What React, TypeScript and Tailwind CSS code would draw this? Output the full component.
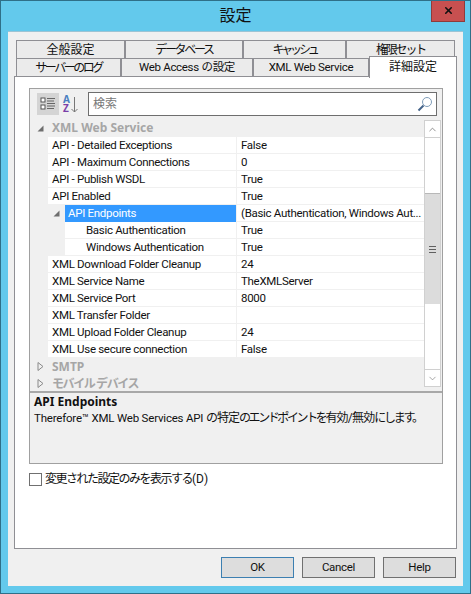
import React from 'react';
import { ChevronUp, ChevronDown, X } from 'lucide-react';

const FONT = "font-['Roboto','Noto_Sans_CJK_JP',sans-serif]";
const BOLD = "font-['Noto_Sans','Noto_Sans_CJK_JP',sans-serif] font-bold";
const LATIN = 'text-[11.5px] tracking-[-0.3px]';

const TOP_TABS = [
  { label: '全般設定', w: 'w-[109px]', track: 'text-[12px]' },
  { label: 'データベース', w: 'w-[118px]', track: 'text-[12px] tracking-[-2.3px]' },
  { label: 'キャッシュ', w: 'w-[103px]', track: 'text-[12px] tracking-[-3.2px]' },
  { label: '権限セット', w: 'w-[109px]', track: 'text-[12px] tracking-[-2.2px]' },
];

const BOTTOM_TABS = [
  { label: 'サーバーのログ', w: 'w-[105px]', track: 'text-[12px] tracking-[-2.5px]' },
  { label: 'Web Access の設定', w: 'w-[132px]', track: LATIN },
  { label: 'XML Web Service', w: 'w-[116px]', track: LATIN },
];

const ROWS = [
  { name: 'API - Detailed Exceptions', value: 'False' },
  { name: 'API - Maximum Connections', value: '0' },
  { name: 'API - Publish WSDL', value: 'True' },
  { name: 'API Enabled', value: 'True' },
  { name: 'API Endpoints', value: '(Basic Authentication, Windows Aut...', kind: 'selected' },
  { name: 'Basic Authentication', value: 'True', kind: 'child' },
  { name: 'Windows Authentication', value: 'True', kind: 'child' },
  { name: 'XML Download Folder Cleanup', value: '24' },
  { name: 'XML Service Name', value: 'TheXMLServer' },
  { name: 'XML Service Port', value: '8000' },
  { name: 'XML Transfer Folder', value: '' },
  { name: 'XML Upload Folder Cleanup', value: '24' },
  { name: 'XML Use secure connection', value: 'False' },
];

function Tab({ label, w, track }: { label: string; w: string; track: string }) {
  return (
    <div className={`${w} h-[18px] shrink-0 flex items-center justify-center bg-[#ebebeb] border border-b-0 border-[#8f8f94] leading-none text-[#111] whitespace-nowrap ${track}`}>
      {label}
    </div>
  );
}

function Expanded() {
  return (
    <svg width="7" height="7" viewBox="0 0 7 7" className="shrink-0">
      <path d="M6.5 0.5V6.5H0.5Z" fill="#6e6e6e" />
    </svg>
  );
}

function Collapsed() {
  return (
    <svg width="7" height="9" viewBox="0 0 7 9" className="shrink-0">
      <path d="M1 0.5L6 4.5L1 8.5Z" fill="none" stroke="#8a8a8a" />
    </svg>
  );
}

function Row({ name, value, kind }: { name: string; value: string; kind?: string }) {
  const selected = kind === 'selected';
  const child = kind === 'child';
  const nested = selected || child;
  return (
    <div className={`h-[17px] flex leading-[15px] text-[#111] ${LATIN}`}>
      <div className="w-[18px] shrink-0" />
      {nested ? (
        <div className="w-[17px] shrink-0 flex items-center justify-center">{selected && <Expanded />}</div>
      ) : null}
      <div
        className={`${nested ? 'w-[171px]' : 'w-[188px]'} shrink-0 h-[17px] pt-[1px] border-b border-[#f0f0f0] whitespace-nowrap ${
          selected ? 'bg-[#3399ff] text-white pl-[3px] border-b-[#3399ff]' : child ? 'bg-white pl-[21px]' : 'bg-white pl-[4px]'
        }`}
      >
        {name}
      </div>
      <div className="w-px shrink-0 bg-[#f0f0f0]" />
      <div className="w-[187px] shrink-0 h-[17px] pt-[1px] bg-white border-b border-[#f0f0f0] pl-[4px] whitespace-nowrap overflow-hidden">
        {value}
      </div>
    </div>
  );
}

function GroupHeader({ label, open, h, track }: { label: string; open?: boolean; h: string; track?: string }) {
  return (
    <div className={`${h} flex items-center pl-[7px] gap-[8px] text-[12px] text-[#a6a6a6] whitespace-nowrap ${BOLD}`}>
      {open ? <Expanded /> : <Collapsed />}
      <span className={track}>{label}</span>
    </div>
  );
}

function Scrollbar() {
  return (
    <div className="absolute left-[394px] top-[31px] w-[17px] h-[267px] bg-white border border-[#d0d0d0] flex flex-col">
      <div className="h-[17px] flex items-center justify-center border-b border-[#d0d0d0] shrink-0">
        <ChevronUp size={11} strokeWidth={1.5} className="text-[#606060]" />
      </div>
      <div className="h-[55px] shrink-0" />
      <div className="h-[111px] shrink-0 bg-[#dcdcdc] border-t border-[#b8b8b8] flex items-center justify-center">
        <div className="w-[7px] h-[7px] flex flex-col justify-between">
          <div className="h-px bg-[#606060]" />
          <div className="h-px bg-[#606060]" />
          <div className="h-px bg-[#606060]" />
        </div>
      </div>
      <div className="flex-1" />
      <div className="h-[17px] flex items-center justify-center border-t border-[#d0d0d0] shrink-0">
        <ChevronDown size={11} strokeWidth={1.5} className="text-[#808080]" />
      </div>
    </div>
  );
}

function DialogButton({ label, primary }: { label: string; primary?: boolean }) {
  return (
    <button className={`w-[73px] h-[21px] bg-[#dddddd] border leading-none text-[#111] ${LATIN} ${primary ? 'border-[#3c7fb1]' : 'border-[#707070]'}`}>
      {label}
    </button>
  );
}

export default function App() {
  return (
    <div className={`${FONT} w-[471px] h-[594px] bg-[#63c9ec] border border-[#2f6f88] flex flex-col overflow-hidden`}>
      {/* Title bar */}
      <div className="relative h-[30px] shrink-0 flex items-center justify-center text-[16px] text-[#111]">
        設定
        <div className="absolute right-[5px] top-[-1px] w-[34px] h-[22px] bg-[#c75050] border border-[#8f3b3b] border-t-0 flex items-center justify-center">
          <X size={11} strokeWidth={3.5} className="text-[#111]" />
        </div>
      </div>

      {/* Client area */}
      <div className="mx-[7px] h-[555px] bg-[#f0f0f0] border-t border-[#9cc4d4] flex flex-col pl-[6px] pr-[6px] pt-[8px]">
        {/* Tabs */}
        <div className="pl-[2px] flex h-[18px] shrink-0">
          {TOP_TABS.map(t => <Tab key={t.label} {...t} />)}
        </div>
        <div className="relative flex h-[18px] shrink-0 pl-[2px]">
          {BOTTOM_TABS.map(t => <Tab key={t.label} {...t} />)}
          <div className="absolute left-[355px] top-[-2px] z-10 w-[88px] h-[22px] pb-[2px] bg-white border border-b-0 border-[#8f8f94] flex items-center justify-center text-[12px] text-[#111]">
            詳細設定
          </div>
        </div>

        {/* Tab page */}
        <div className="h-[473px] shrink-0 bg-white border border-[#8f8f94] px-[14px] pt-[11px]">
          <div className="relative w-[414px] h-[376px] bg-[#f0f0f0] border border-[#a0a0a0] flex flex-col">
            {/* Toolbar */}
            <div className="h-[29px] shrink-0 flex items-start pt-[3px] pl-[7px]">
              <div className="w-[22px] h-[22px] mt-[1px] bg-[#d4d4d4] flex items-center justify-center">
                <svg width="16" height="16" viewBox="0 0 16 16">
                  <rect x="1" y="2" width="4" height="4" fill="#fff" stroke="#555" />
                  <rect x="1" y="9" width="4" height="4" fill="#fff" stroke="#555" />
                  <path d="M7 2.5h8M7 5h7M7 7.5h8M7 10h8M7 12.5h7" stroke="#666" fill="none" />
                </svg>
              </div>
              <div className="w-[22px] h-[22px] mt-[1px] ml-[1px] pl-[3px] flex items-center gap-[1px]">
                <div className={`flex flex-col text-[10px] leading-[9px] ${BOLD}`}>
                  <span className="text-[#4a7fc1]">A</span>
                  <span className="text-[#7a3fa8]">Z</span>
                </div>
                <svg width="7" height="17" viewBox="0 0 7 17" className="shrink-0">
                  <path d="M3.5 1V16M0.5 13l3 3 3-3" fill="none" stroke="#777" />
                </svg>
              </div>
              <div className="ml-[6px] w-[349px] h-[24px] bg-white border border-[#6e6e6e] flex items-center justify-between pl-[4px] pr-[3px] text-[12px] text-[#777]">
                <span>検索</span>
                <svg width="16" height="16" viewBox="0 0 16 16">
                  <circle cx="10" cy="6" r="4.5" fill="none" stroke="#7f9db9" />
                  <path d="M6.5 9.5L1.5 14.5" stroke="#44638a" strokeWidth="2" />
                </svg>
              </div>
            </div>

            {/* Property grid */}
            <div className="h-[273px] shrink-0 flex flex-col">
              <GroupHeader label="XML Web Service" open h="h-[19px] pt-[1px]" />
              {ROWS.map(r => <Row key={r.name} {...r} />)}
              <GroupHeader label="SMTP" h="h-[17px]" />
              <GroupHeader label="モバイル デバイス" h="h-[17px]" track="tracking-[-1.4px]" />
            </div>
            <Scrollbar />

            {/* Description */}
            <div className="border-t-2 border-[#a8a8a8] pl-[4px] pt-[1px] text-[12px] leading-[16px] text-[#111]">
              <div className={BOLD}>API Endpoints</div>
              <div className="whitespace-nowrap">
                <span className="text-[11.5px] tracking-[-0.2px]">Therefore™ XML Web Services API </span>
                <span className="tracking-[-1px]">の特定</span>
                <span className="tracking-[-2.4px]">のエンドポイントを</span>
                <span className="tracking-[-0.8px]">有効/無効</span>
                <span className="tracking-[-2.3px]">にします。</span>
              </div>
            </div>
          </div>

          <label className="mt-[8px] h-[14px] flex items-center gap-[3px] text-[12px] leading-none text-[#111]">
            <span className="w-[13px] h-[13px] bg-white border border-[#707070]" />
            <span className="whitespace-nowrap">
              <span className="tracking-[-1.5px]">変更された設定のみを表示する</span>(D)
            </span>
          </label>
        </div>

        {/* Footer */}
        <div className="flex justify-end gap-[8px] mt-[8px] pr-[1px]">
          <DialogButton label="OK" primary />
          <DialogButton label="Cancel" />
          <DialogButton label="Help" />
        </div>
      </div>
    </div>
  );
}
